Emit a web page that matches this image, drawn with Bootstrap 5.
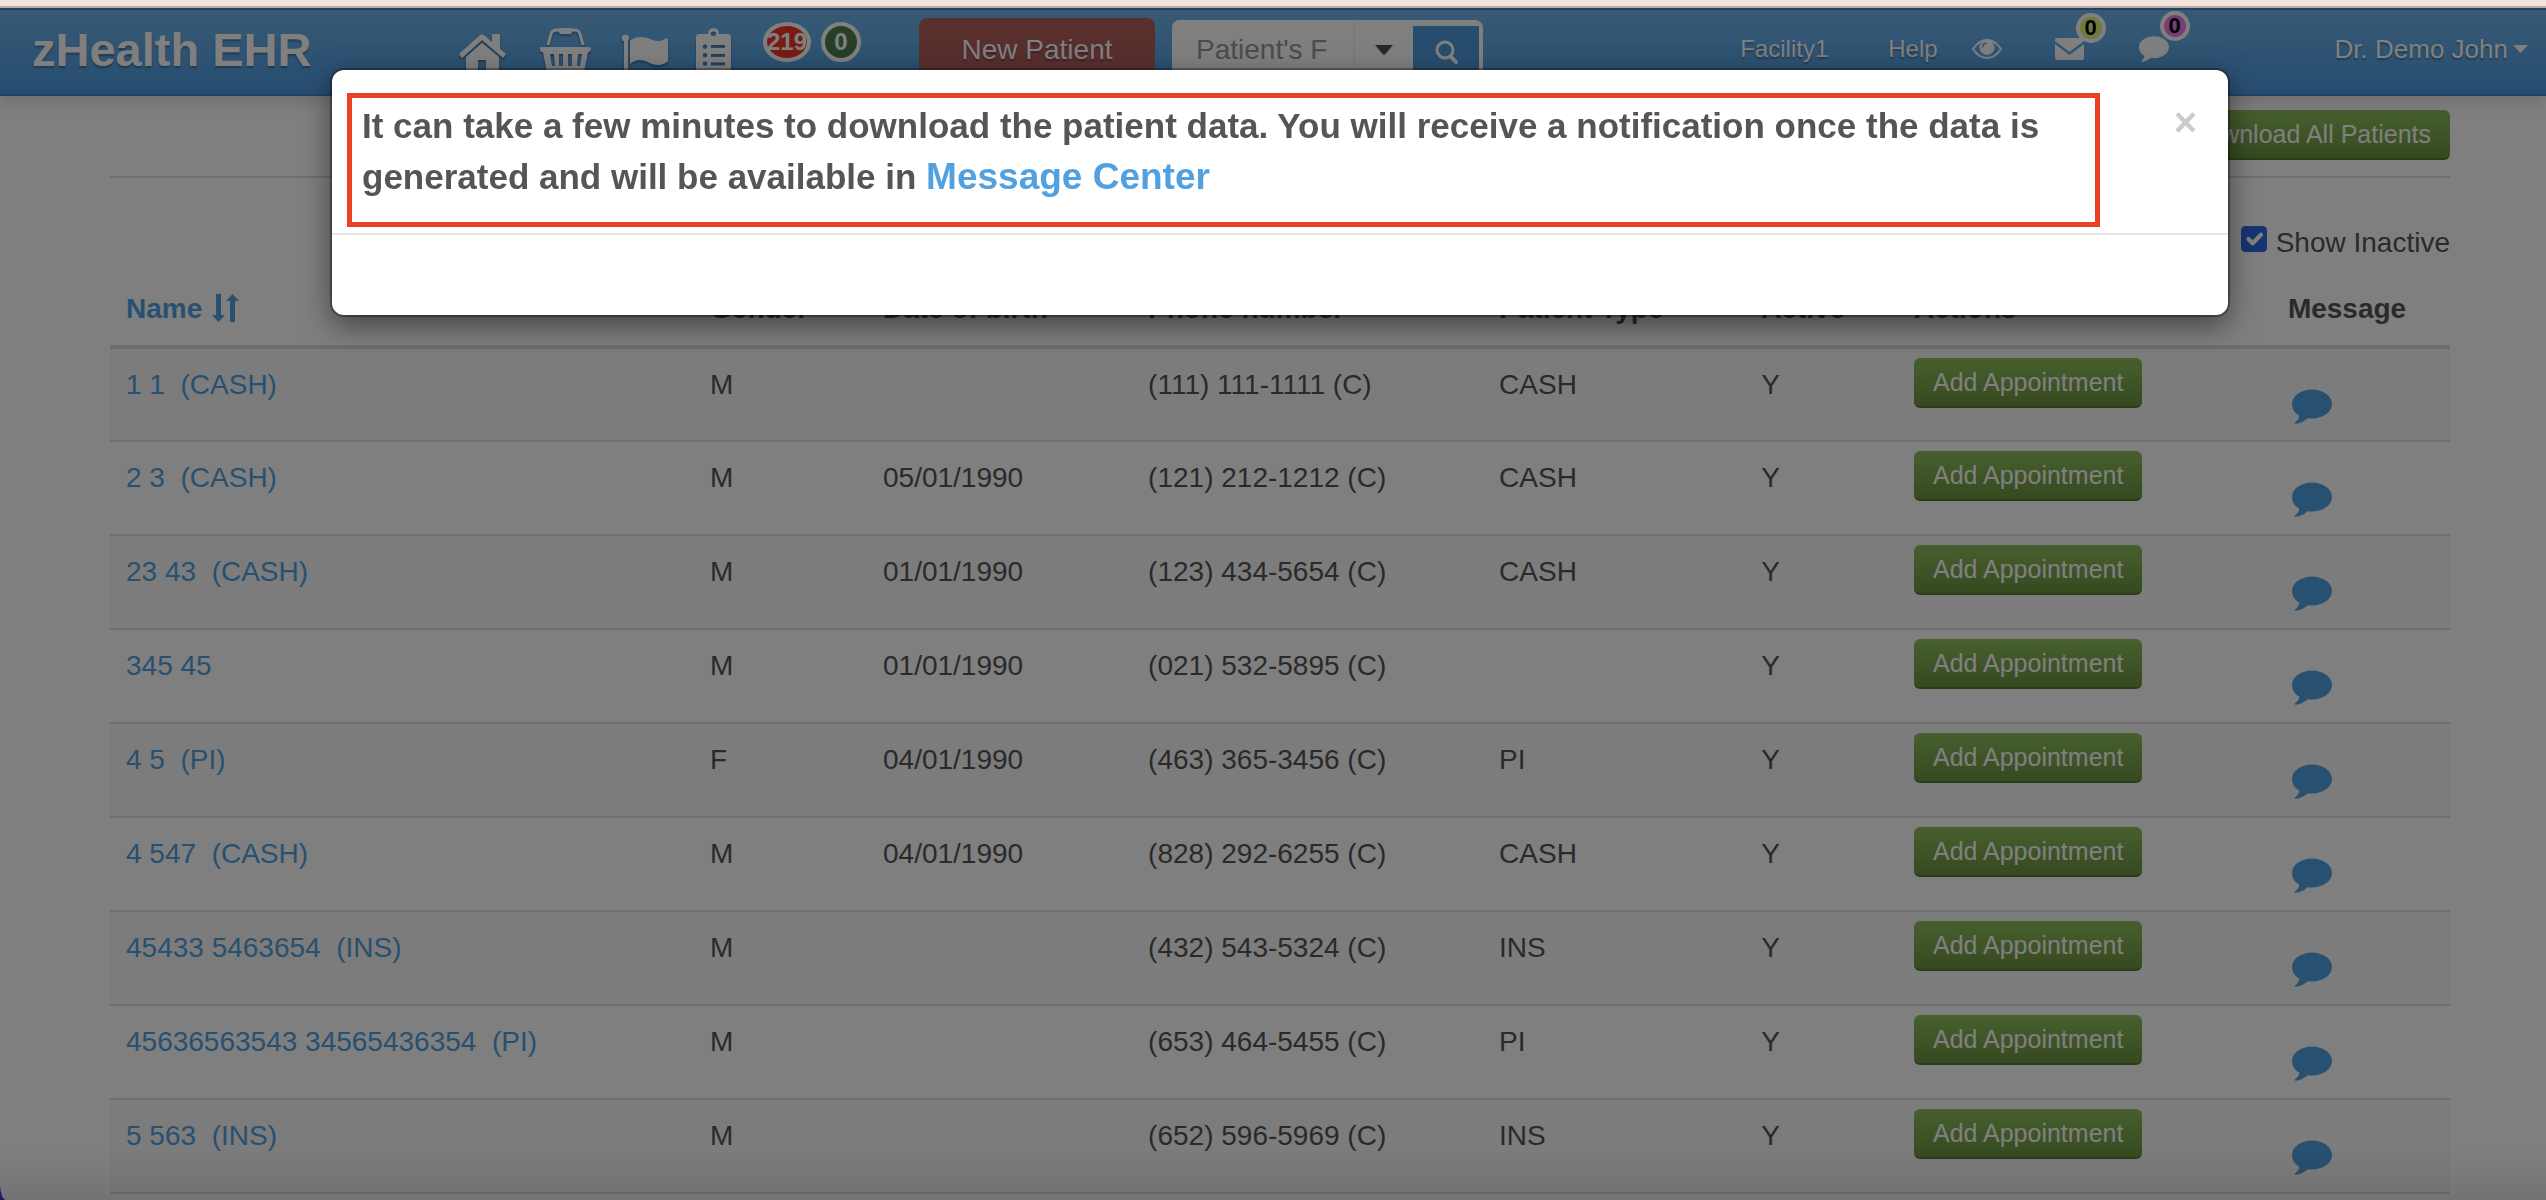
<!DOCTYPE html>
<html lang="en">
<head>
<meta charset="utf-8">
<meta name="viewport" content="width=device-width, initial-scale=1">
<title>zHealth EHR</title>
<link href="https://cdn.jsdelivr.net/npm/bootstrap@5.3.0/dist/css/bootstrap.min.css" rel="stylesheet">
<script defer src="https://cdn.jsdelivr.net/npm/bootstrap@5.3.0/dist/js/bootstrap.bundle.min.js"></script>
<style>
:root { --link: #51a0e0; --ink: #555; }
body { font-family: "Liberation Sans", Arial, sans-serif; font-size: 28px; line-height: 40px; color: var(--ink); background: #5c26f0; }
a { color: var(--link); text-decoration: none; }
.page { height: 100vh; overflow: hidden; background: #fff; border-bottom-left-radius: 6px 16px; }
.page-fade { position: fixed; inset: auto 0 0 0; height: 50px; background: linear-gradient(transparent, rgba(0,0,0,.09)); z-index: 1051; }
.window-edge { height: 8px; background: #f4e3dc; border-bottom: 2px solid #b9b0a4; position: relative; z-index: 1060; }

/* top bar */
.topbar { height: 88px; padding: 0 18px 0 32px; background: linear-gradient(#70b4e8, #4c9ae2); border: solid #4485c4; border-width: 2px 0; box-shadow: 0 2px 20px rgba(0,0,0,.2); position: relative; }
.topbar a { color: #fff; text-shadow: 0 2px 2px rgba(0,0,0,.3); }
.topbar .brand { font-size: 47px; font-weight: 700; line-height: 56px; padding-top: 12px; width: 427px; }
.tool-icons { padding-top: 18px; width: 304px; }
.tool-icons svg { fill: #fff; display: block; height: 58px; filter: drop-shadow(0 2px 1px rgba(0,0,0,.3)); }
.count { display: flex; align-items: center; justify-content: center; width: 40px; height: 40px; border: 4px solid #fff; border-radius: 50%; font-size: 24px; font-weight: 700; color: #fff; }
.count-wide { width: 48px; }
.bg-due { background: #f53526; }
.bg-done { background: #4f7f4d; }
.top-counts { gap: 10px; padding-top: 12px; width: 156px; }
.btn-new { width: 236px; height: 64px; margin-top: 8px; padding: 0; background: #b35f5c; border: 0; border-radius: 8px; color: #fff; font-size: 28px; text-shadow: 0 2px 2px rgba(0,0,0,.3); }
.btn-new:hover { background: #b35f5c; color: #fff; }
.search { width: 311px; height: 60px; margin: 10px 0 0 17px; padding-right: 4px; border-radius: 8px; background: #fff; overflow: hidden; }
.search .form-control { border: 0; border-right: 1px solid #eee; width: 183px; flex: none; font-size: 28px; padding: 0 0 0 24px; border-radius: 0; color: #555; }
.search .form-control::placeholder { color: #999; opacity: 1; }
.search button { border: 0; padding: 0; background: none; }
.search .drop { width: 58px; }
.search .find { flex: 1; background: #4f9bdd; margin-top: 6px; }
.nav-right { padding-top: 23px; font-size: 24px; line-height: 32px; }
.nav-right svg { display: block; fill: #fff; }
.alert-link-icon { position: relative; }
.alert-link-icon .pip { position: absolute; top: -25px; left: 21px; width: 30px; height: 30px; border: 4px solid #fff; border-radius: 50%; display: flex; align-items: center; justify-content: center; color: #000; font-size: 22px; font-weight: 700; text-shadow: none; }
.pip-mail { background: #e3f47c; }
.pip-chat { background: #ee7aec; }
.help-link { margin-left: 60px; }
.eye-link { margin-left: 34px; }
.mail-link { margin-left: 53px; }
.chat-link { margin-left: 55px; }
.user-menu { margin-left: 166px; font-size: 26px; gap: 5px; }

/* patient list */
.content { padding: 14px 96px 0 110px; }
.btn-leaf { height: 50px; padding: 0 19px; font-size: 25px; line-height: 48px; color: #fff; background: linear-gradient(#8fc05c, #6d9340); border: 0; border-bottom: 2px solid #587834; border-radius: 6px; }
.btn-leaf:hover { color: #fff; background: linear-gradient(#8fc05c, #6d9340); }
.rule { height: 2px; margin: 16px 0 45px; background: #ddd; }
.show-inactive .form-check-input { width: 26px; height: 26px; margin: 3px 9px 0 0; border-radius: 4px; float: none; flex: none; background-color: #2f6ae6; border-color: #2f6ae6; background-size: 28px; }
.patients { table-layout: fixed; margin-top: 10px; --bs-table-color: var(--ink); color: var(--ink); }
.patients > thead > tr > th { padding: 16px; border-bottom: 4px solid #ddd; color: var(--ink); font-weight: 700; }
.patients > tbody > tr > td { height: 94px; padding: 16px 16px 0; border-bottom: 2px solid #ddd; color: var(--ink); white-space: nowrap; box-shadow: none; }
.patients > tbody > tr:nth-child(odd) > td { background: #f9f9f9; }
.patients > tbody > tr > .cell-action { padding-top: 9px; }
.patients > tbody > tr > .cell-chat { padding: 40px 20px 0; }
.cell-action .btn { display: block; }
.cell-chat svg { display: block; fill: var(--link); }
.sort-icon { fill: var(--link); margin: -6px 0 0 10px; }

/* dialog */
.modal-backdrop.show { opacity: .5; }
.modal-dialog.notice { max-width: none; margin: 70px 318px 0 332px; }
.notice .modal-content { border: 0; border-radius: 12px; color: var(--ink); box-shadow: 0 0 0 2px rgba(0,0,0,.3), 0 10px 30px rgba(0,0,0,.5); }
.notice .modal-header { padding: 23px 31px 6px 15px; border-bottom: 2px solid #e5e5e5; align-items: flex-start; }
.notice-box { flex: 1; margin-right: 74px; border: 5px solid #eb4025; padding: 2px 10px 20px; font-size: 35px; line-height: 51px; font-weight: 700; }
.notice-box a { font-size: 37px; line-height: 40px; }
.notice-close { border: 0; background: none; padding: 0; margin-top: 9px; font-size: 40px; line-height: 40px; font-weight: 700; color: #ccc; }
.notice .modal-body { height: 80px; }
</style>
</head>
<body>
<svg width="0" height="0" class="position-absolute" aria-hidden="true">
  <symbol id="i-bubble" viewBox="0 0 40 34"><path d="M20 0C31 0 40 6.400 40 14.500S31 29 20 29C18.500 29 17 28.900 15.700 28.700C12.500 31.500 8 34 3.600 34.200C2.600 34.200 2.500 33.200 3.300 32.600C5.500 30.800 7.200 28.500 7.300 26.200C2.700 23.500 0 19.300 0 14.500C0 6.400 9 0 20 0Z"/></symbol>
</svg>

<div class="page">
  <div class="window-edge"></div>
  <nav class="topbar d-flex align-items-start">
    <a class="brand" href="#">zHealth EHR</a>
    <div class="tool-icons d-flex">
      <a href="#" aria-label="Home"><svg width="81" viewBox="0 0 81 58"><path d="M0 26L20 8Q23 5 26 8L33 14V6H41V21L47 26L44 30L23 12L3 30Z"/><path d="M7 29L23 15L40 29V56H27V32H19V56H7Z"/></svg></a>
      <a href="#" aria-label="Basket"><svg width="82" viewBox="0 0 82 58"><path d="M8 17L11 6Q12 2 17 2H34Q39 2 40 6L43 17" fill="none" stroke="#fff" stroke-width="3"/><rect x="19" y="0" width="13" height="6" rx="2"/><path fill-rule="evenodd" d="M2 19H49Q51 19 51 21T49 24H48L43 50Q42 54 39 54H12Q9 54 8 50L3 24H2Q0 24 0 21T2 19ZM10 26L12 38H15L14 26ZM19 26V38H23V26ZM28 26V38H32V26ZM38 26L37 38H40L42 26Z"/></svg></a>
      <a href="#" aria-label="Flag"><svg width="74" viewBox="0 0 74 58"><circle cx="3.500" cy="10" r="3.500"/><path d="M2 12H6V58H2Z"/><path d="M8 13Q12 9 19 9C27 9 30 13 36 13Q41 13 44 10Q46 10 46 12V33Q42 37 36 37C28 37 25 32 18 32Q12 32 8 36Z"/></svg></a>
      <a href="#" aria-label="Reports"><svg width="35" viewBox="0 0 35 58"><path fill-rule="evenodd" d="M3 6H12Q12 0 17.500 0T23 6H32Q35 6 35 9V54Q35 57 32 57H3Q0 57 0 54V9Q0 6 3 6ZM17.500 3.500A2.300 2.300 0 1 0 17.500 8A2.300 2.300 0 1 0 17.500 3.500ZM9 16.500A2.200 2.200 0 1 0 9 21A2.200 2.200 0 1 0 9 16.500ZM9 25A2.200 2.200 0 1 0 9 29.500A2.200 2.200 0 1 0 9 25ZM9 33.500A2.200 2.200 0 1 0 9 38A2.200 2.200 0 1 0 9 33.500ZM15 17V20H29V17ZM15 26V29H29V26ZM15 34.500V37.500H29V34.500Z"/></svg></a>
    </div>
    <div class="top-counts d-flex">
      <span class="count count-wide bg-due">219</span>
      <span class="count bg-done">0</span>
    </div>
    <button type="button" class="btn btn-new">New Patient</button>
    <form class="search d-flex">
      <input class="form-control shadow-none" type="text" placeholder="Patient's F" aria-label="Patient search">
      <button type="button" class="drop" aria-label="Search options"><svg width="18" height="10" viewBox="0 0 18 10" class="d-block mx-auto"><path fill="#555" d="M0 0H18L11 8.500Q9 11 7 8.500Z"/></svg></button>
      <button type="button" class="find" aria-label="Search"><svg width="27" height="28" viewBox="0 0 27 28" class="d-block mx-auto" fill="none" stroke="#fff"><circle cx="12" cy="11" r="8" stroke-width="3"/><path d="M18 18L23 23" stroke-width="4" stroke-linecap="round"/></svg></button>
    </form>
    <div class="nav-right d-flex align-items-center ms-auto">
      <a href="#">Facility1</a>
      <a class="help-link" href="#">Help</a>
      <a class="eye-link" href="#" aria-label="View"><svg width="30" height="20" viewBox="0 0 30 20"><path d="M1 10Q7 1 15 1T29 10Q23 19 15 19T1 10Z" fill="none" stroke="#fff" stroke-width="2"/><circle cx="15" cy="8.500" r="7.500"/><path d="M10.500 8.500Q10.500 4.500 14.500 4" fill="none" stroke="#5aa5de" stroke-width="1.500"/></svg></a>
      <a class="mail-link alert-link-icon" href="#" aria-label="Mail"><svg width="29" height="22" viewBox="0 0 29 22"><path d="M2 0H27Q29 0 29 2V3L14.500 14L0 3V2Q0 0 2 0Z"/><path d="M0 6L14.500 17L29 6V20Q29 22 27 22H2Q0 22 0 20Z"/></svg><span class="pip pip-mail">0</span></a>
      <a class="chat-link alert-link-icon" href="#" aria-label="Chat"><svg width="30" height="26"><use href="#i-bubble"/></svg><span class="pip pip-chat">0</span></a>
      <a class="user-menu d-flex align-items-center" href="#">Dr. Demo John<svg width="15" height="8" viewBox="0 0 15 8"><path d="M0 0H15L7.500 8Z"/></svg></a>
    </div>
  </nav>

  <main class="content">
    <div class="d-flex justify-content-end"><button type="button" class="btn btn-leaf">Download All Patients</button></div>
    <div class="rule"></div>
    <div class="show-inactive d-flex justify-content-end">
      <input class="form-check-input" type="checkbox" id="inactive" checked>
      <label for="inactive">Show Inactive</label>
    </div>
    <table class="table patients mb-0">
      <colgroup><col style="width:24.96%"><col style="width:7.39%"><col style="width:11.33%"><col style="width:15%"><col style="width:11.2%"><col style="width:6.53%"><col style="width:15.98%"><col style="width:7.61%"></colgroup>
      <thead><tr>
        <th scope="col"><a href="#">Name<svg class="sort-icon" width="27" height="28" viewBox="0 0 27 28"><path d="M4 0H9V21H13L6.500 28L0 21H4ZM18 28V7H14L20.500 0L27 7H23V28Z"/></svg></a></th>
        <th scope="col">Gender</th><th scope="col">Date of birth</th><th scope="col">Phone number</th><th scope="col">Patient Type</th><th scope="col">Active</th><th scope="col">Actions</th><th scope="col">Message</th>
      </tr></thead>
      <tbody>
        <tr><td><a href="#">1 1 &nbsp;(CASH)</a></td><td>M</td><td></td><td>(111) 111-1111 (C)</td><td>CASH</td><td>Y</td><td class="cell-action"><button type="button" class="btn btn-leaf">Add Appointment</button></td><td class="cell-chat"><a href="#" aria-label="Message"><svg width="40" height="35"><use href="#i-bubble"/></svg></a></td></tr>
        <tr><td><a href="#">2 3 &nbsp;(CASH)</a></td><td>M</td><td>05/01/1990</td><td>(121) 212-1212 (C)</td><td>CASH</td><td>Y</td><td class="cell-action"><button type="button" class="btn btn-leaf">Add Appointment</button></td><td class="cell-chat"><a href="#" aria-label="Message"><svg width="40" height="35"><use href="#i-bubble"/></svg></a></td></tr>
        <tr><td><a href="#">23 43 &nbsp;(CASH)</a></td><td>M</td><td>01/01/1990</td><td>(123) 434-5654 (C)</td><td>CASH</td><td>Y</td><td class="cell-action"><button type="button" class="btn btn-leaf">Add Appointment</button></td><td class="cell-chat"><a href="#" aria-label="Message"><svg width="40" height="35"><use href="#i-bubble"/></svg></a></td></tr>
        <tr><td><a href="#">345 45</a></td><td>M</td><td>01/01/1990</td><td>(021) 532-5895 (C)</td><td></td><td>Y</td><td class="cell-action"><button type="button" class="btn btn-leaf">Add Appointment</button></td><td class="cell-chat"><a href="#" aria-label="Message"><svg width="40" height="35"><use href="#i-bubble"/></svg></a></td></tr>
        <tr><td><a href="#">4 5 &nbsp;(PI)</a></td><td>F</td><td>04/01/1990</td><td>(463) 365-3456 (C)</td><td>PI</td><td>Y</td><td class="cell-action"><button type="button" class="btn btn-leaf">Add Appointment</button></td><td class="cell-chat"><a href="#" aria-label="Message"><svg width="40" height="35"><use href="#i-bubble"/></svg></a></td></tr>
        <tr><td><a href="#">4 547 &nbsp;(CASH)</a></td><td>M</td><td>04/01/1990</td><td>(828) 292-6255 (C)</td><td>CASH</td><td>Y</td><td class="cell-action"><button type="button" class="btn btn-leaf">Add Appointment</button></td><td class="cell-chat"><a href="#" aria-label="Message"><svg width="40" height="35"><use href="#i-bubble"/></svg></a></td></tr>
        <tr><td><a href="#">45433 5463654 &nbsp;(INS)</a></td><td>M</td><td></td><td>(432) 543-5324 (C)</td><td>INS</td><td>Y</td><td class="cell-action"><button type="button" class="btn btn-leaf">Add Appointment</button></td><td class="cell-chat"><a href="#" aria-label="Message"><svg width="40" height="35"><use href="#i-bubble"/></svg></a></td></tr>
        <tr><td><a href="#">45636563543 34565436354 &nbsp;(PI)</a></td><td>M</td><td></td><td>(653) 464-5455 (C)</td><td>PI</td><td>Y</td><td class="cell-action"><button type="button" class="btn btn-leaf">Add Appointment</button></td><td class="cell-chat"><a href="#" aria-label="Message"><svg width="40" height="35"><use href="#i-bubble"/></svg></a></td></tr>
        <tr><td><a href="#">5 563 &nbsp;(INS)</a></td><td>M</td><td></td><td>(652) 596-5969 (C)</td><td>INS</td><td>Y</td><td class="cell-action"><button type="button" class="btn btn-leaf">Add Appointment</button></td><td class="cell-chat"><a href="#" aria-label="Message"><svg width="40" height="35"><use href="#i-bubble"/></svg></a></td></tr>
      </tbody>
    </table>
  </main>
</div>

<div class="modal-backdrop show"></div>
<div class="page-fade"></div>
<div class="modal show d-block" tabindex="-1" role="dialog">
  <div class="modal-dialog notice">
    <div class="modal-content">
      <div class="modal-header">
        <div class="notice-box">It can take a few minutes to download the patient data. You will receive a notification once the data is generated and will be available in <a href="#">Message Center</a></div>
        <button type="button" class="notice-close" aria-label="Close">×</button>
      </div>
      <div class="modal-body"></div>
    </div>
  </div>
</div>
</body>
</html>
